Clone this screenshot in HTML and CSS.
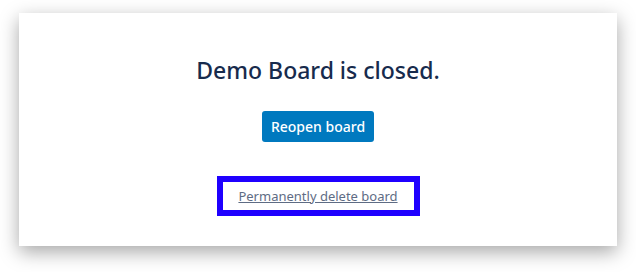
FILE: index.html
```html
<html>
<head>
<link rel="stylesheet" href="styles.css">
</head>
<body>
<div class="card">
	<h1 class="title">Demo Board is closed.</h1>
	<button class="reopen">Reopen board</button>
	<div class="highlight">
		<a href="#" class="delete">Permanently delete board</a>
	</div>
</div>
</body>
</html>
```
FILE: styles.css
```css
body {
	margin: 0;
	background: #fff;
	font-family: "Noto Sans", "Open Sans", sans-serif;
}
.card {
	width: 598px;
	height: 233px;
	margin: 13px 0 0 19px;
	background: #fff;
	box-shadow: 0 6px 18px rgba(0,0,0,0.35);
	display: flex;
	flex-direction: column;
	align-items: center;
}
.title {
	margin: 43px 0 0 0;
	font-size: 23px;
	font-weight: 500;
	line-height: 28px;
	color: #172b4d;
}
.reopen {
	margin-top: 27px;
	width: 112px;
	height: 31px;
	border: 0;
	border-radius: 3px;
	background: #0079bf;
	color: #fff;
	font-family: inherit;
	font-size: 14px;
	font-weight: 500;
}
.highlight {
	margin-top: 34px;
	width: 191px;
	height: 28px;
	border: 6px solid #1f00ff;
	display: flex;
	align-items: center;
	justify-content: center;
}
.delete {
	color: #5e6c84;
	font-size: 13px;
}
```
